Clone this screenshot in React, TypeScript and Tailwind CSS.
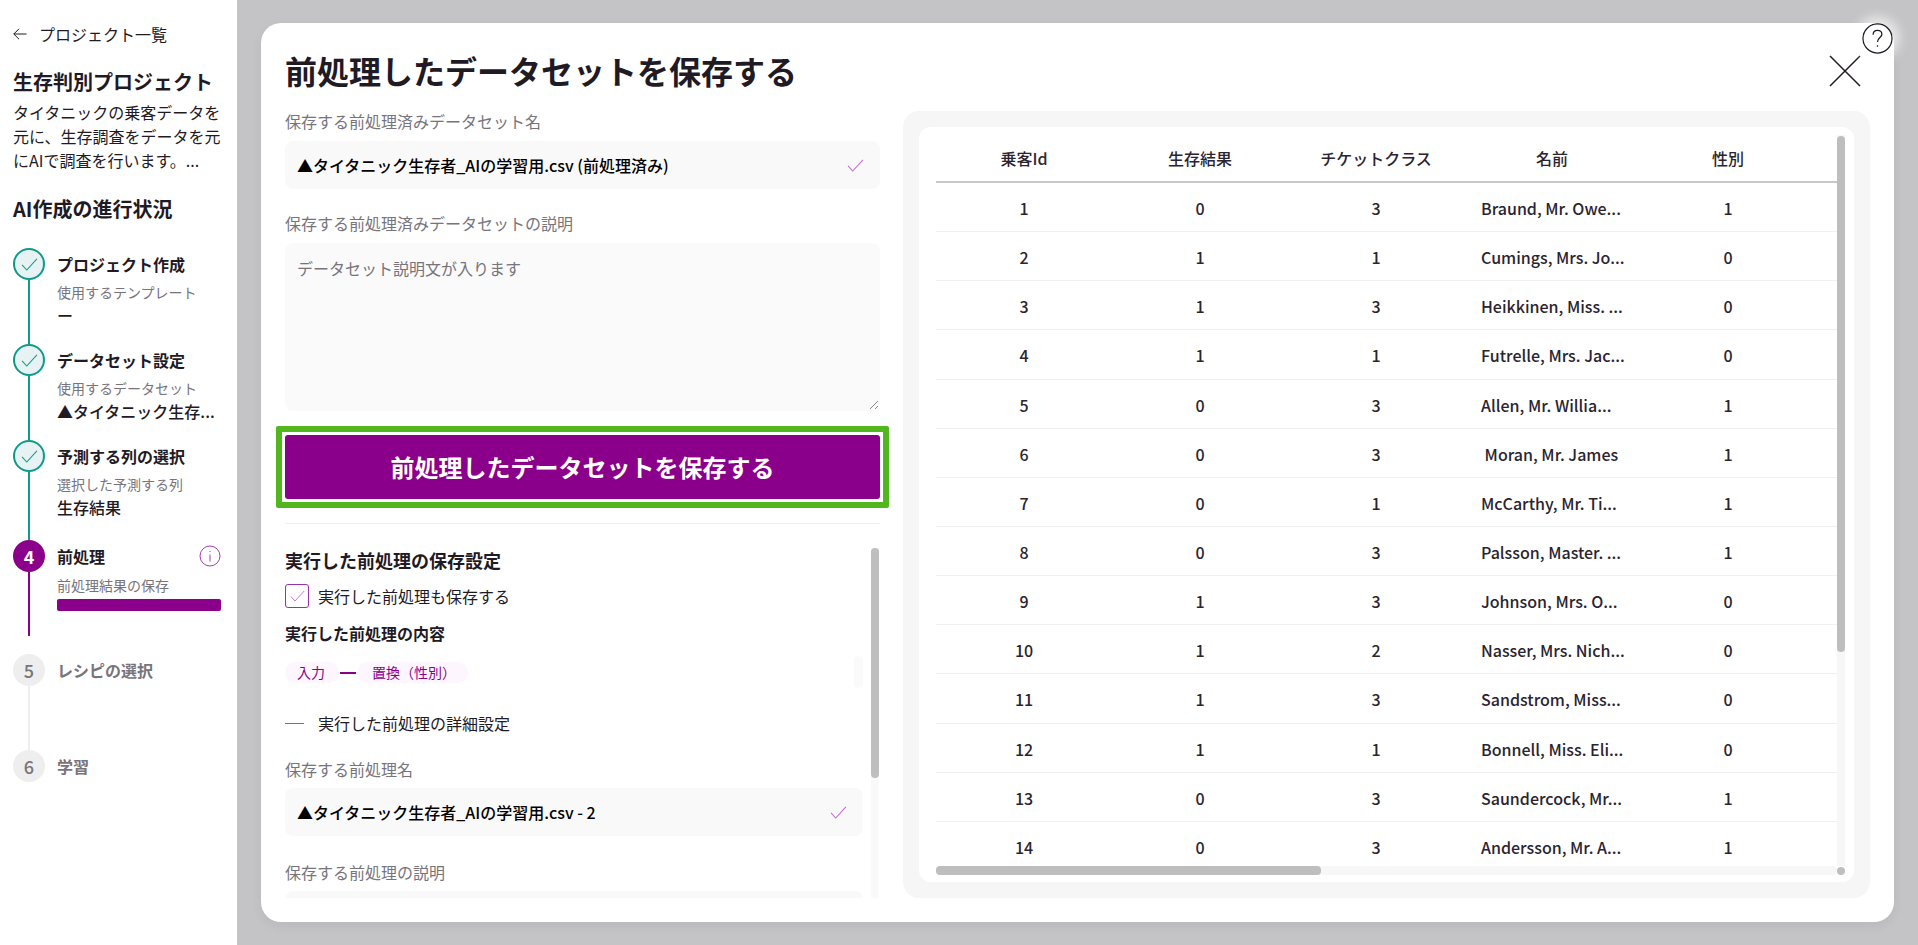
const passengers = [
  ['1', '0', '3', 'Braund, Mr. Owe...', '1'],
  ['2', '1', '1', 'Cumings, Mrs. Jo...', '0'],
  ['3', '1', '3', 'Heikkinen, Miss. ...', '0'],
  ['4', '1', '1', 'Futrelle, Mrs. Jac...', '0'],
  ['5', '0', '3', 'Allen, Mr. Willia...', '1'],
  ['6', '0', '3', ' Moran, Mr. James', '1'],
  ['7', '0', '1', 'McCarthy, Mr. Ti...', '1'],
  ['8', '0', '3', 'Palsson, Master. ...', '1'],
  ['9', '1', '3', 'Johnson, Mrs. O...', '0'],
  ['10', '1', '2', 'Nasser, Mrs. Nich...', '0'],
  ['11', '1', '3', 'Sandstrom, Miss...', '0'],
  ['12', '1', '1', 'Bonnell, Miss. Eli...', '0'],
  ['13', '0', '3', 'Saundercock, Mr...', '1'],
  ['14', '0', '3', 'Andersson, Mr. A...', '1'],
]

function Tick({ className, color }: { className: string; color: string }) {
  return (
    <svg viewBox="0 0 18 14" fill="none" stroke={color} strokeWidth="1.1" className={className}>
      <path d="M1 7.5 L6 13 L17 1" />
    </svg>
  )
}

function DoneCircle() {
  return (
    <div className="w-8 h-8 shrink-0 rounded-full border-[2px] border-[#0f9a8a] bg-[#e6f3f2] flex items-center justify-center">
      <Tick className="w-[17px] h-[13px]" color="#0f9a8a" />
    </div>
  )
}

function Step({ title, sub, value, tall }: { title: string; sub: string; value: string; tall?: boolean }) {
  return (
    <div className={tall ? 'flex h-[100px]' : 'flex h-24'}>
      <div className="w-8 flex flex-col items-center">
        <DoneCircle />
        <div className="flex-1 w-[2px] bg-[#0f9a8a]" />
      </div>
      <div className="ml-3 w-[168px] pt-1">
        <div className="text-base leading-6 font-bold">{title}</div>
        <div className="text-sm leading-6 text-[#77747c] mt-[4px]">{sub}</div>
        <div className="text-base leading-6 font-medium -mt-[1px]">{value}</div>
      </div>
    </div>
  )
}

function TodoStep({ n, title, line }: { n: string; title: string; line?: boolean }) {
  return (
    <div className={line ? 'flex h-24' : 'flex h-8'}>
      <div className="w-8 flex flex-col items-center">
        <div className="w-8 h-8 shrink-0 rounded-full bg-[#eeeeee] text-[#77747c] font-medium text-lg flex items-center justify-center">{n}</div>
        {line && <div className="flex-1 w-[2px] bg-[#eeeeee]" />}
      </div>
      <div className="ml-3 pt-1 text-base leading-6 font-bold text-[#77747c]">{title}</div>
    </div>
  )
}

function Sidebar() {
  return (
    <aside className="w-[237px] shrink-0 bg-white pl-[13px] text-[#1f1a24]">
      <div className="flex items-center h-6 mt-[22px]">
        <svg viewBox="0 0 14 12" fill="none" stroke="#1f1a24" strokeWidth="1" className="w-[14px] h-3">
          <path d="M13.5 6 H0.8 M6 0.8 L0.8 6 L6 11.2" />
        </svg>
        <span className="ml-[12px] text-base">プロジェクト一覧</span>
      </div>
      <h2 className="text-xl leading-7 font-bold mt-[22px]">生存判別プロジェクト</h2>
      <p className="text-base leading-6 w-[214px] mt-[4px]">タイタニックの乗客データを元に、生存調査をデータを元にAIで調査を行います。...</p>
      <h2 className="text-xl leading-7 font-bold mt-[23px]">AI作成の進行状況</h2>
      <div className="mt-[25px]">
        <Step title="プロジェクト作成" sub="使用するテンプレート" value="ー" />
        <Step title="データセット設定" sub="使用するデータセット" value="▲タイタニック生存..." />
        <Step title="予測する列の選択" sub="選択した予測する列" value="生存結果" tall />
        <div className="flex h-[114px]">
          <div className="w-8 flex flex-col items-center pb-[18px]">
            <div className="w-8 h-8 shrink-0 rounded-full text-white font-bold text-lg flex items-center justify-center bg-[#8b008b]">4</div>
            <div className="flex-1 w-[2px] bg-[#8b008b]" />
          </div>
          <div className="ml-3 w-[164px] pt-1">
            <div className="flex items-center justify-between">
              <span className="text-base leading-6 font-bold">前処理</span>
              <svg viewBox="0 0 22 22" fill="none" stroke="#a63fb5" strokeWidth="1" className="w-[22px] h-[22px]">
                <circle cx="11" cy="11" r="10" />
                <path d="M11 9.5 V16.5 M11 6 V7" />
              </svg>
            </div>
            <div className="text-sm leading-6 text-[#77747c] mt-[5px]">前処理結果の保存</div>
            <div className="h-3 rounded-[2px] bg-[#8b008b] mt-[2px]" />
          </div>
        </div>
        <TodoStep n="5" title="レシピの選択" line />
        <TodoStep n="6" title="学習" />
      </div>
    </aside>
  )
}

function Field({ value, className }: { value: string; className: string }) {
  return (
    <div className={`h-12 rounded-lg bg-[#f9f9f9] pl-3 pr-4 flex items-center justify-between text-base font-medium text-black ${className}`}>
      <span>{value}</span>
      <Tick className="w-[17px] h-[13px]" color="#c26bd0" />
    </div>
  )
}

function Label({ children, className = '' }: { children: string; className?: string }) {
  return <div className={`text-base leading-6 text-[#77747c] ${className}`}>{children}</div>
}

function SaveForm() {
  return (
    <div className="w-[595px] shrink-0 flex flex-col">
      <Label className="-mt-px">保存する前処理済みデータセット名</Label>
      <Field value="▲タイタニック生存者_AIの学習用.csv (前処理済み)" className="mt-2" />
      <Label className="mt-[22px]">保存する前処理済みデータセットの説明</Label>
      <div className="relative h-[168px] rounded-lg bg-[#fafafa] mt-2 px-3 pt-[13px] text-base leading-6 text-[#77747c]">
        データセット説明文が入ります
        <svg viewBox="0 0 10 10" stroke="#8a8a8a" strokeWidth="1" className="absolute right-[1px] bottom-[1px] w-[10px] h-[10px]">
          <path d="M1 9 L9 1 M6 9 L9 6" />
        </svg>
      </div>
      <div className="-mx-[9px] mt-[15px] border-[6px] border-[#52b61e] rounded-[2px] bg-white p-[3px]">
        <button className="w-full h-16 block rounded-[3px] bg-[#8b008b] text-white text-2xl font-bold">
          前処理したデータセットを保存する
        </button>
      </div>
      <div className="h-px bg-[#f0f0f0] mt-[15px]" />
      <div className="flex mt-6 h-[350px] overflow-hidden">
        <div className="w-[578px] shrink-0">
          <h3 className="text-lg leading-6 font-bold">実行した前処理の保存設定</h3>
          <div className="flex items-center mt-3">
            <div className="w-6 h-6 rounded-[3px] border-[1.5px] border-[#9c2fac] flex items-center justify-center">
              <Tick className="w-[15px] h-[12px]" color="#c26bd0" />
            </div>
            <span className="ml-[9px] text-base leading-6">実行した前処理も保存する</span>
          </div>
          <div className="text-base leading-6 font-bold mt-[13px]">実行した前処理の内容</div>
          <div className="flex items-center mt-[17px] relative">
            <span className="h-[21px] w-[54px] rounded-full bg-[#fdf6fe] text-sm leading-[21px] text-[#8b008b] pl-3">入力</span>
            <div className="w-4 h-[2px] bg-[#8b008b] mx-px" />
            <span className="h-[21px] w-[111px] rounded-full bg-[#fdf6fe] text-sm leading-[21px] text-[#8b008b] pl-[15px]">置換（性別）</span>
            <div className="absolute right-0 -top-[6px] h-8 w-[9px] rounded bg-[#fafafa]" />
          </div>
          <div className="flex items-center mt-[28px] h-6">
            <div className="w-[19px] h-px bg-[#77747c]" />
            <span className="ml-[14px] text-base leading-6">実行した前処理の詳細設定</span>
          </div>
          <Label className="mt-[22px]">保存する前処理名</Label>
          <Field value="▲タイタニック生存者_AIの学習用.csv - 2" className="mt-[7px]" />
          <Label className="mt-6">保存する前処理の説明</Label>
          <div className="h-[100px] rounded-lg bg-[#f9f9f9] mt-[7px]" />
        </div>
        <div className="ml-2 w-2 bg-[#f9f9f9]">
          <div className="h-[230px] rounded bg-[#bebebe]" />
        </div>
      </div>
    </div>
  )
}

function DataTable() {
  const headers = ['乗客Id', '生存結果', 'チケットクラス', '名前', '性別']
  return (
    <div className="w-[967px] h-[787px] rounded-2xl bg-[#f6f6f7] p-4 mt-px">
      <div className="h-[755px] rounded-xl bg-white pl-[17px] pr-[7px] pt-2">
        <div className="flex h-[731px]">
          <div className="w-[901px] overflow-hidden text-base text-[#2a2430]">
            <div className="flex h-12 items-center border-b-2 border-[#c8c8c8]">
              {headers.map((h) => (
                <div key={h} className="w-[176px] shrink-0 text-center font-medium">{h}</div>
              ))}
            </div>
            {passengers.map((p) => (
              <div key={p[0]} className="flex h-[49.15px] pt-[2px] items-center border-b border-[#f0f0f0] font-medium">
                <div className="w-[176px] shrink-0 text-center">{p[0]}</div>
                <div className="w-[176px] shrink-0 text-center">{p[1]}</div>
                <div className="w-[176px] shrink-0 text-center">{p[2]}</div>
                <div className="w-[176px] shrink-0 pl-[17px] whitespace-pre">{p[3]}</div>
                <div className="w-[176px] shrink-0 text-center">{p[4]}</div>
              </div>
            ))}
          </div>
          <div className="w-2 bg-[#f7f7f7]">
            <div className="h-[516px] mt-px rounded bg-[#bebebe]" />
          </div>
        </div>
        <div className="flex items-center h-[9px]">
          <div className="w-[901px] h-[9px] bg-[#f7f7f7] rounded-sm">
            <div className="w-[385px] h-[9px] rounded bg-[#bebebe]" />
          </div>
          <div className="w-2 h-2 rounded-full bg-[#bebebe]" />
        </div>
      </div>
    </div>
  )
}

export default function App() {
  return (
    <div className="w-[1918px] h-[945px] flex overflow-hidden font-['Noto_Sans_CJK_JP','Noto_Sans',sans-serif] text-[#1f1a24]">
      <Sidebar />
      <main className="relative flex-1 bg-[#c4c4c6] pl-6 pr-6 pt-[23px]">
        <div className="h-[899px] rounded-[20px] bg-white pl-6 pr-6 shadow-[0_4px_12px_rgba(0,0,0,0.06)] overflow-hidden">
          <div className="flex justify-between h-[87px] pt-[30px]">
            <h1 className="text-[32px] leading-[34px] font-bold">前処理したデータセットを保存する</h1>
            <svg viewBox="0 0 32 32" fill="none" stroke="#1f1a24" strokeWidth="1.5" className="w-8 h-8 mt-[2px] mr-[9px]">
              <path d="M1 1 L31 31 M31 1 L1 31" />
            </svg>
          </div>
          <div className="flex gap-[23px]">
            <SaveForm />
            <DataTable />
          </div>
        </div>
        <svg viewBox="0 0 32 32" fill="white" stroke="#1f1a24" strokeWidth="1.3" className="absolute right-[25px] top-[23px] w-[31px] h-[31px] rounded-full shadow-[0_0_12px_6px_rgba(255,255,255,0.7)]">
          <circle cx="16" cy="16" r="15" />
          <path d="M11.5 12 C11.5 9 13.5 7.5 16 7.5 C18.5 7.5 20.5 9 20.5 11.5 C20.5 15 16 15 16 19.5 M16 23 V24.5" fill="none" />
        </svg>
      </main>
    </div>
  )
}
